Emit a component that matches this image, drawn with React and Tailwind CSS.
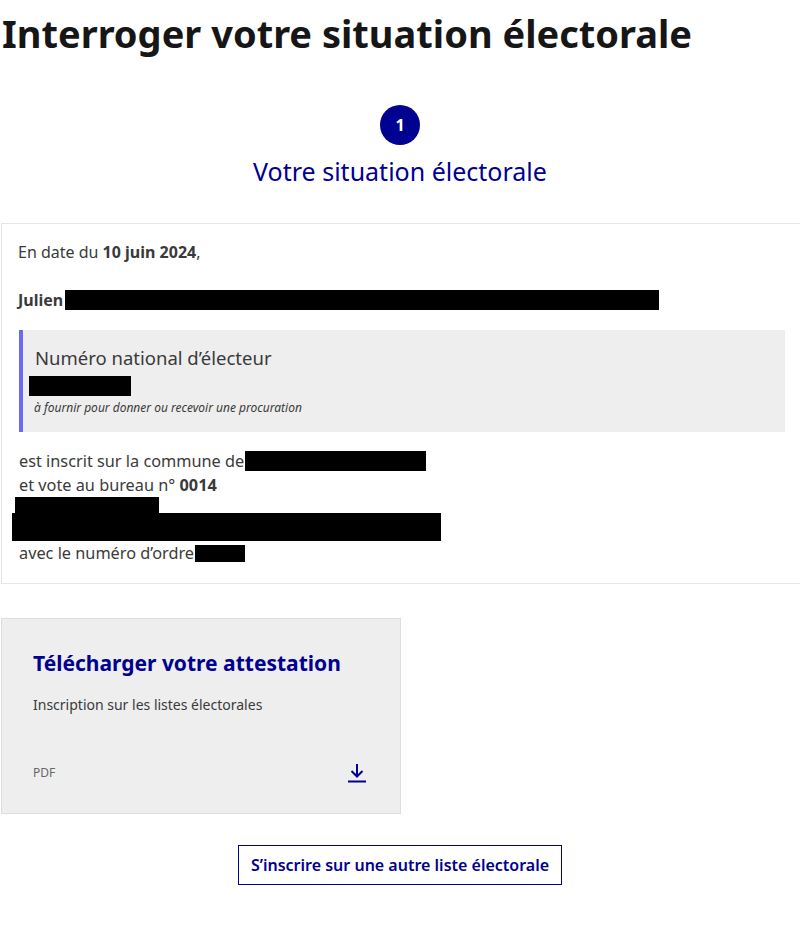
import React from 'react';

const Redacted = ({ className }) => <span className={`inline-block bg-black align-middle ${className}`}></span>;

const App = () => {
  return (
    <div className="w-[800px] overflow-hidden bg-white text-[#3a3a3a]" style={{ fontFamily: '"Noto Sans", "Open Sans", sans-serif' }}>
      <h1 className="pl-[2px] pt-[9px] text-[38px] font-bold leading-[48px] text-[#161616]">
        Interroger votre situation électorale
      </h1>

      {/* Stepper */}
      <div className="mt-[48px] flex flex-col items-center">
        <div className="flex h-[40px] w-[40px] items-center justify-center rounded-full bg-[#000091] text-[16px] font-bold text-white">
          1
        </div>
        <p className="mt-[10px] text-[25px] leading-[32px] text-[#000091]">Votre situation électorale</p>
      </div>

      {/* Situation card */}
      <div className="ml-[1px] mt-[36px] w-[820px] border border-[#e5e5e5] pb-[18px] pl-[16px] pr-[17px] pt-[16px] text-[16px] leading-[24px]">
        <p>
          En date du <span className="font-bold">10 juin 2024</span>,
        </p>
        <p className="mt-[24px] flex items-center font-bold">
          Julien<Redacted className="ml-[2px] h-[20px] w-[594px]" />
        </p>

        <div className="ml-[1px] mt-[18px] w-[766px] border-l-4 border-[#6a6af4] bg-[#eeeeee] pb-[14px] pl-[6px] pt-[15px]">
          <p className="pl-[6px] text-[18.5px] leading-[26px]">Numéro national d’électeur</p>
          <div className="mt-[5px] h-[20px] w-[102px] bg-black"></div>
          <p className="mt-[2px] pl-[5px] text-[12px] italic leading-[20px]">à fournir pour donner ou recevoir une procuration</p>
        </div>

        <div className="ml-[1px] mt-[17px] text-[16.3px]">
          <p className="flex items-center">
            est inscrit sur la commune de<Redacted className="ml-[1px] h-[20px] w-[181px]" />
          </p>
          <p>
            et vote au bureau n° <span className="font-bold">0014</span>
          </p>
          <div className="-ml-[4px] h-[16px] w-[144px] bg-black"></div>
          <div className="-ml-[7px] h-[28px] w-[429px] bg-black"></div>
          <p className="flex items-center">
            avec le numéro d’ordre<Redacted className="ml-[1px] h-[17px] w-[50px]" />
          </p>
        </div>
      </div>

      {/* Download tile */}
      <div className="ml-[1px] mt-[34px] flex h-[196px] w-[400px] flex-col border border-[#dddddd] bg-[#eeeeee] px-[31px] pb-[30px] pt-[30px]">
        <h2 className="text-[21px] font-bold leading-[28px] text-[#000091]">Télécharger votre attestation</h2>
        <p className="mt-[16px] text-[14px] leading-[24px] text-[#3a3a3a]">Inscription sur les listes électorales</p>
        <div className="mt-auto flex items-center justify-between pr-[2px]">
          <span className="text-[12px] leading-[20px] text-[#666666]">PDF</span>
          <svg width="20" height="20" viewBox="0 0 20 20" fill="none" stroke="#000091" strokeWidth="2">
            <path d="M10 1v12M4.5 8l5.5 5.5L15.5 8M1 18.5h18" />
          </svg>
        </div>
      </div>

      {/* Action */}
      <div className="mt-[31px] flex justify-center pb-[47px]">
        <button className="h-[40px] border border-[#000091] px-[12px] text-[16px] font-semibold text-[#000091]">
          S’inscrire sur une autre liste électorale
        </button>
      </div>
    </div>
  );
};

export default App;
